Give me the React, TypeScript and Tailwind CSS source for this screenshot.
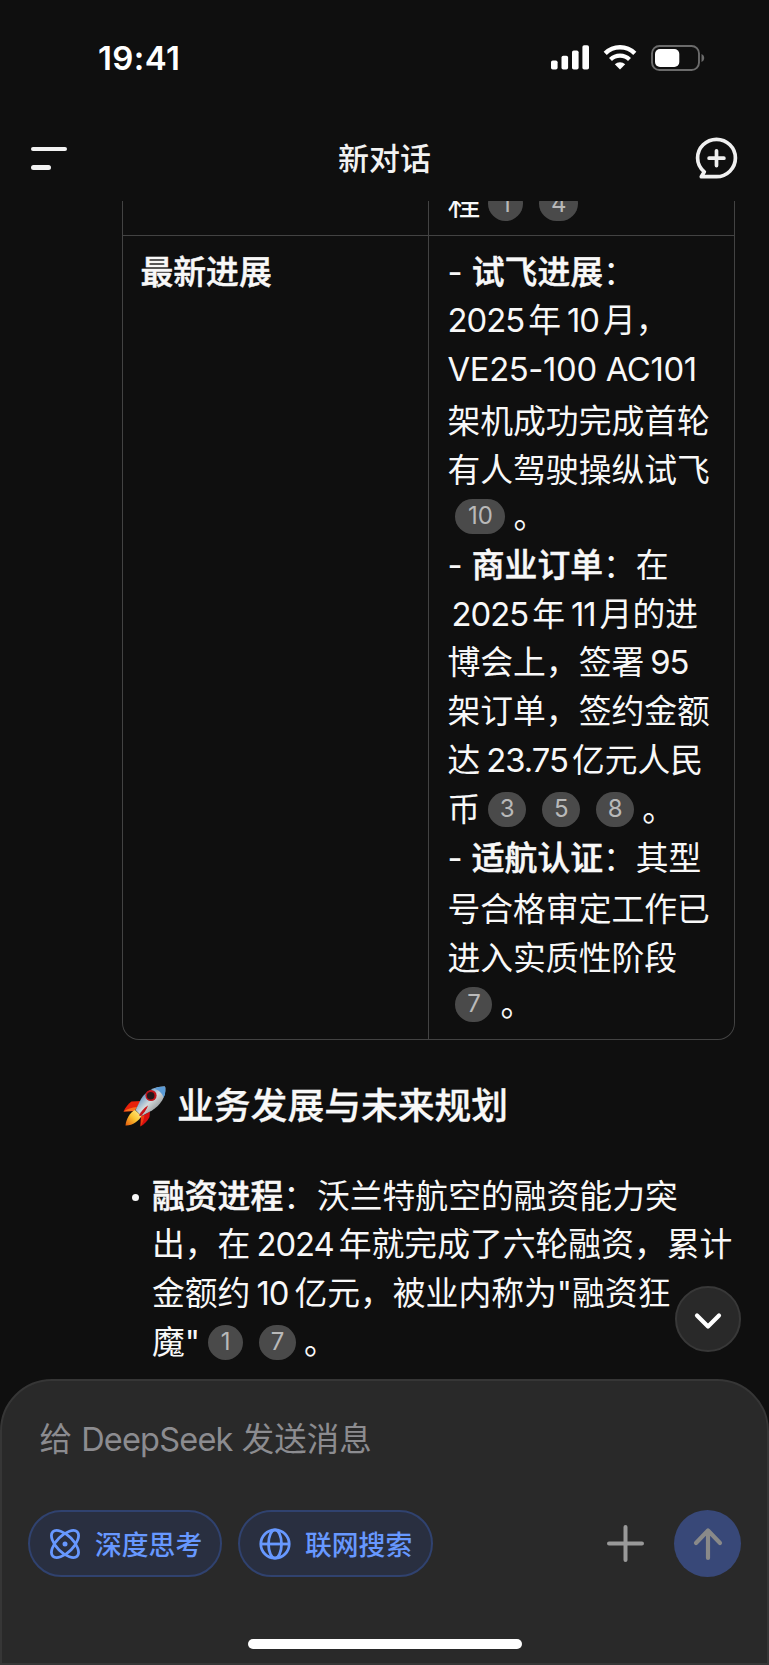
import type { ReactNode } from 'react'

function Cite({ n, className = 'w-[38px]' }: { n: number; className?: string }) {
  return (
    <span
      className={`mx-2 inline-flex h-[35px] shrink-0 items-center justify-center rounded-full bg-[#4a4a4a] text-[24px] leading-none text-[#b9b9b9] ${className}`}
    >
      {n}
    </span>
  )
}

function Line({ children, className = '' }: { children: ReactNode; className?: string }) {
  return <div className={`flex h-[48.8px] items-center whitespace-pre ${className}`}>{children}</div>
}

function Strong({ children }: { children: ReactNode }) {
  return <b className="font-medium [-webkit-text-stroke:0.5px_#f8f8f8]">{children}</b>
}

function Num({ children, className = 'mr-[4px] ml-[6px]' }: { children: ReactNode; className?: string }) {
  return <span className={`tracking-[-1px] ${className}`}>{children}</span>
}

function StatusBar() {
  return (
    <div className="flex h-[115px] items-center justify-between pl-[98px] pr-[64px]">
      <span className="mt-[2px] text-[33px] leading-none font-semibold tracking-[0.4px] text-white">19:41</span>
      <div className="flex items-center">
        <svg width="38" height="25" viewBox="0 0 38 25" fill="#fff">
          <rect x="0" y="15.5" width="6.6" height="9" rx="1.8" />
          <rect x="10.5" y="10.7" width="6.6" height="13.8" rx="1.8" />
          <rect x="21" y="5.5" width="6.6" height="19" rx="1.8" />
          <rect x="31.4" y="0.3" width="6.6" height="24.2" rx="1.8" />
        </svg>
        <svg className="ml-[14px]" width="34" height="25" viewBox="0 0 34 25" fill="none">
          <path d="M2.2 8.400a20.900 20.900 0 0 1 29.600 0" stroke="#fff" strokeWidth="4.4" />
          <path d="M7.5 14.5a13.5 13.5 0 0 1 19 0" stroke="#fff" strokeWidth="4.2" />
          <path d="M17 24.6 11.8 19.3a7.4 7.4 0 0 1 10.4 0Z" fill="#fff" />
        </svg>
        <svg className="ml-[14px]" width="54" height="26" viewBox="0 0 54 26" fill="none">
          <rect x="1" y="1" width="47" height="24" rx="7.5" stroke="#6b6b6b" strokeWidth="1.9" />
          <rect x="4" y="4" width="24.3" height="18" rx="5" fill="#fff" />
          <path d="M50.5 9v8c1.7-.7 2.7-2.2 2.7-4s-1-3.3-2.7-4Z" fill="#6b6b6b" />
        </svg>
      </div>
    </div>
  )
}

function Header() {
  return (
    <div className="grid h-[86px] grid-cols-3 items-center pl-[31px] pr-[31px]">
      <div className="flex flex-col gap-[14px]">
        <span className="h-[4.5px] w-[36px] rounded-full bg-[#f2f2f2]" />
        <span className="h-[4.5px] w-[20px] rounded-full bg-[#f2f2f2]" />
      </div>
      <h1 className="mt-px text-center text-[31px] leading-none font-medium text-[#f2f2f2]">新对话</h1>
      <svg className="justify-self-end" width="44" height="44" viewBox="0 0 44 44" fill="none" stroke="#f0f0f0" strokeWidth="3.7" strokeLinecap="round" strokeLinejoin="round">
        <path d="M22.5 40.7H7.3l3-4.9C6 32.2 3.6 27.6 3.6 22a18.9 18.7 0 1 1 18.9 18.7Z" />
        <path d="M22.5 14.8v14.8M15.1 22.2h14.8" />
      </svg>
    </div>
  )
}

function Rocket() {
  return (
    <svg width="43" height="41" viewBox="0 0 43 41" className="shrink-0">
      <defs>
        <linearGradient id="hull" x1="0" y1="0" x2="1" y2="1">
          <stop offset="0.2" stopColor="#4b86bd" />
          <stop offset="0.5" stopColor="#d5dadc" />
          <stop offset="0.8" stopColor="#8b8f90" />
        </linearGradient>
        <linearGradient id="flame" x1="1" y1="0" x2="0" y2="1">
          <stop offset="0" stopColor="#fff3a0" />
          <stop offset="0.5" stopColor="#fbc531" />
          <stop offset="1" stopColor="#e5590c" />
        </linearGradient>
      </defs>
      <path d="M18 15 8.5 15.5C5 18 2.5 21.5.5 25.5l11-.5Z" fill="#e8210b" />
      <path d="M.5 25.5 11.5 25l2.5-4C9 21.5 4 23 .5 25.5Z" fill="#f7701d" />
      <path d="M27 25.5 26.5 31c-2 4-5.500 7.500-9 9.500l.5-10Z" fill="#d80f10" />
      <path d="M17.5 40.5 18 30.5l3.500-1.500C21 33 19.800 37 17.500 40.500Z" fill="#f03a10" />
      <path d="M12 24c-5 2.500-9 9-9.500 15.500C9 40 16 35 18.500 30Z" fill="url(#flame)" />
      <path d="M41 .6C32 .5 23 5 18 13l-5.500 11 6 6L29 24.500C37.500 19 43 11 42.300 2 42.200 1 42 .7 41 .6Z" fill="url(#hull)" />
      <path d="M41 .6c-3.500 0-7 .8-10 2.200 4.500 1 8.500 4.500 9.500 9 1.600-3.200 2.200-6.500 1.800-9.800C42.200 1 42 .7 41 .6Z" fill="#5b9bd6" />
      <path d="M16 29.500c2-4 5-7.500 9-10-1.500 4-4 7.500-7 10.500Z" fill="#c9141a" />
      <circle cx="28" cy="9.500" r="5.600" fill="#c3141b" />
      <circle cx="27.700" cy="9.700" r="3.800" fill="#26181b" />
    </svg>
  )
}

function InfoTable() {
  return (
    <div className="ml-[121.5px] grid h-[838.5px] w-[613.5px] grid-cols-[306.400px_1fr] grid-rows-[35px_1fr] overflow-hidden rounded-b-[17px] border border-t-0 border-[#434343]">
      <div className="border-r border-b border-[#434343]" />
      <div className="flex items-end border-b border-[#434343] pb-[7px] pl-[18.600px]">
        <Line>
          程
          <Cite n={1} className="w-[35px]" />
          <Cite n={4} className="w-[39px]" />
        </Line>
      </div>
      <div className="border-r border-[#434343] pt-[11.500px] pl-[18px]">
        <Line><Strong>最新进展</Strong></Line>
      </div>
      <div className="pt-[11.500px] pl-[18.600px]">
        <Line>- <Strong>试飞进展</Strong>：</Line>
        <Line>
          <Num className="mr-[4px]">2025</Num>年<Num>10</Num>月，
        </Line>
        <Line>
          <span className="tracking-[-0.35px]">VE25-100 AC101</span>
        </Line>
        <Line className="mt-[3px]">架机成功完成首轮</Line>
        <Line>有人驾驶操纵试飞</Line>
        <Line className="mt-[-2.5px]">
          <Cite n={10} className="w-[50px]" />。
        </Line>
        <Line>- <Strong>商业订单</Strong>：在</Line>
        <Line>
          <Num className="mr-[4px] ml-[4px]">2025</Num>年<Num>11</Num>月的进
        </Line>
        <Line>
          博会上，签署<Num>95</Num>
        </Line>
        <Line>架订单，签约金额</Line>
        <Line>
          达<Num>23.75</Num>亿元人民
        </Line>
        <Line>
          币<Cite n={3} />
          <Cite n={5} />
          <Cite n={8} />。
        </Line>
        <Line>- <Strong>适航认证</Strong>：其型</Line>
        <Line className="mt-[2.5px]">号合格审定工作已</Line>
        <Line>进入实质性阶段</Line>
        <Line className="mt-[-2.5px]">
          <Cite n={7} className="w-[37px]" />。
        </Line>
      </div>
    </div>
  )
}

function Answer() {
  return (
    <main className="h-[1178px] overflow-hidden text-[32.8px] leading-none text-[#f8f8f8]">
      <InfoTable />
      <h2 className="mt-[46px] ml-[123px] flex h-[41px] items-center text-[36.8px] font-medium">
        <Rocket />
        <span className="ml-[11px] [-webkit-text-stroke:0.3px_#f8f8f8]">业务发展与未来规划</span>
      </h2>
      <div className="mt-[45px] ml-[132px] flex">
        <span className="mt-[22px] size-[7px] shrink-0 rounded-full bg-[#f8f8f8]" />
        <div className="ml-[13px]">
          <Line><Strong>融资进程</Strong>：<span className="ml-px">沃兰特航空的融资能力突</span></Line>
          <Line>
            出，在<Num className="mr-[5px] ml-[6px]">2024</Num>年就完成了六轮融资，累计
          </Line>
          <Line>
            金额约<Num className="mx-[6px]">10</Num>亿元，被业内称为"融资狂
          </Line>
          <Line>
            魔"
            <Cite n={1} className="w-[35px]" />
            <Cite n={7} className="w-[37px]" />。
          </Line>
        </div>
      </div>
    </main>
  )
}

function Composer() {
  return (
    <footer className="flex h-[286px] flex-col rounded-t-[52px] border-2 border-[#363636] bg-[#292929]">
      <div className="mt-[35px] ml-[37.5px] flex h-[48px] items-center text-[32.5px] leading-none whitespace-pre text-[#8c8c90]">
        给 <span className="tracking-[-0.8px]">DeepSeek</span> 发送消息
      </div>
      <div className="mt-[46px] flex h-[67px] items-center pr-[26px] pl-[26px] text-[26.8px] leading-none font-medium text-[#6798ff]">
        <button className="flex h-full w-[194px] items-center rounded-full border-2 border-[#30426f] bg-[#292f40] pl-[19px]">
          <svg width="32" height="32" viewBox="0 0 32 32" fill="none" stroke="currentColor" strokeWidth="2.8">
            <ellipse cx="16" cy="16" rx="17.2" ry="8.4" transform="rotate(45 16 16)" />
            <ellipse cx="16" cy="16" rx="17.2" ry="8.4" transform="rotate(-45 16 16)" />
            <circle cx="16" cy="16" r="2.5" fill="currentColor" stroke="none" />
          </svg>
          <span className="mt-[3px] ml-[14px]">深度思考</span>
        </button>
        <button className="ml-[16px] flex h-full w-[195px] items-center rounded-full border-2 border-[#30426f] bg-[#292f40] pl-[19px]">
          <svg width="32" height="32" viewBox="0 0 32 32" fill="none" stroke="currentColor" strokeWidth="2.8">
            <circle cx="16" cy="16" r="14.2" />
            <ellipse cx="16" cy="16" rx="6.5" ry="14.2" />
            <path d="M2 16h28" />
          </svg>
          <span className="mt-[3px] ml-[14px]">联网搜索</span>
        </button>
        <svg className="ml-auto" width="37" height="37" viewBox="0 0 37 37" stroke="#999" strokeWidth="4" strokeLinecap="round">
          <path d="M18.5 2v33M2 18.5h33" />
        </svg>
        <button className="ml-[30px] flex size-[67px] items-center justify-center rounded-full bg-[#384878]">
          <svg width="32" height="34" viewBox="0 0 32 34" fill="none" stroke="#898989" strokeWidth="4.2" strokeLinecap="round" strokeLinejoin="round">
            <path d="M16 31V4M4 16 16 3.5 28 16" />
          </svg>
        </button>
      </div>
      <div className="mt-auto mb-[14px] h-[10px] w-[274px] self-center rounded-full bg-white" />
    </footer>
  )
}

export default function App() {
  return (
    <div
      lang="zh-CN"
      className="relative h-[1665px] w-[769px] overflow-hidden bg-[#0f0f0f] font-['Inter','Noto_Sans_CJK_SC',sans-serif]"
    >
      <StatusBar />
      <Header />
      <Answer />
      <button className="absolute top-[1286px] left-[675px] flex size-[66px] items-center justify-center rounded-full border-2 border-[#383838] bg-[#292929]">
        <svg className="mt-[3px]" width="28" height="20" viewBox="0 0 28 20" fill="none" stroke="#fff" strokeWidth="4.2" strokeLinecap="round" strokeLinejoin="round">
          <path d="M3 4.5 14 15.5 25 4.5" />
        </svg>
      </button>
      <Composer />
    </div>
  )
}
